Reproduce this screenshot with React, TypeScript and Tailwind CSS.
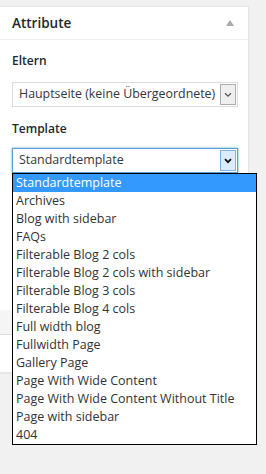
import React from 'react';

const templates = [
  'Standardtemplate',
  'Archives',
  'Blog with sidebar',
  'FAQs',
  'Filterable Blog 2 cols',
  'Filterable Blog 2 cols with sidebar',
  'Filterable Blog 3 cols',
  'Filterable Blog 4 cols',
  'Full width blog',
  'Fullwidth Page',
  'Gallery Page',
  'Page With Wide Content',
  'Page With Wide Content Without Title',
  'Page with sidebar',
  '404',
];

function Chevron({ dark }: { dark?: boolean }) {
  return (
    <svg width="8" height="6" viewBox="0 0 8 6" className="block">
      <path
        d="M1 1.2 L4 4.2 L7 1.2"
        fill="none"
        stroke={dark ? '#111' : '#555'}
        strokeWidth={dark ? 1.8 : 1.3}
      />
    </svg>
  );
}

function Select({ value, focused }: { value: string; focused?: boolean }) {
  return (
    <div
      className={
        focused
          ? 'flex h-[25px] w-[226px] items-center border border-[#5b9dd9] bg-white shadow-[0_0_2px_rgba(30,140,190,0.8)]'
          : 'flex h-[25px] w-[226px] items-center border border-[#ddd] bg-white'
      }
    >
      <span className="flex-1 overflow-hidden whitespace-nowrap pl-[6px] text-[12.4px] text-[#32373c]">{value}</span>
      <span
        className={
          focused
            ? 'mr-[1px] flex h-[21px] w-[16px] shrink-0 items-center justify-center border border-[#7eb4ea] bg-[#dcecfc]'
            : 'mr-[1px] flex h-[21px] w-[16px] shrink-0 items-center justify-center border border-[#acacac] bg-[#efefef]'
        }
      >
        <Chevron dark={focused} />
      </span>
    </div>
  );
}

export default function App() {
  return (
    <div
      className="min-h-[474px] w-[266px] bg-[#f1f1f1] pt-[6px]"
      style={{ fontFamily: '"Open Sans", "Noto Sans", sans-serif' }}
    >
      <div className="relative ml-[-1px] w-[250px] border border-[#e5e5e5] bg-white shadow-[0_1px_1px_rgba(0,0,0,0.04)]">
        {/* Header */}
        <div className="flex h-[33px] items-center justify-between border-b border-[#eee] pl-[12px] pr-[14px]">
          <h2 className="text-[13.5px] font-semibold text-[#23282d]">Attribute</h2>
          <span className="h-0 w-0 border-x-[4px] border-b-[6px] border-x-transparent border-b-[#aaa]" />
        </div>

        <div className="pl-[12px]">
          <p className="mt-[12px] h-[18px] text-[12px] leading-[18px] font-semibold text-[#23282d]">Eltern</p>
          <div className="mt-[12px]">
            <Select value="Hauptseite (keine Übergeordnete)" />
          </div>

          <p className="mt-[13px] h-[18px] text-[12px] leading-[18px] font-semibold text-[#23282d]">Template</p>
          <div className="relative mt-[10px]">
            <Select value="Standardtemplate" focused />

            {/* Open dropdown list */}
            <ul className="absolute left-0 top-[25px] z-10 w-[245px] border border-black bg-white">
              {templates.map((t, i) => (
                <li
                  key={t}
                  className={
                    i === 0
                      ? 'h-[18px] bg-[#3399ff] pl-[3px] text-[12.5px] leading-[18px] text-white'
                      : 'h-[18px] pl-[3px] text-[12.5px] leading-[18px] text-[#333]'
                  }
                >
                  {t}
                </li>
              ))}
            </ul>
          </div>
        </div>

        {/* Content hidden under the dropdown */}
        <div className="mt-[137px] h-[25px] border-b border-[#ddd] bg-[#f5f5f5]" />
        <div className="h-[37px]" />
      </div>
    </div>
  );
}
